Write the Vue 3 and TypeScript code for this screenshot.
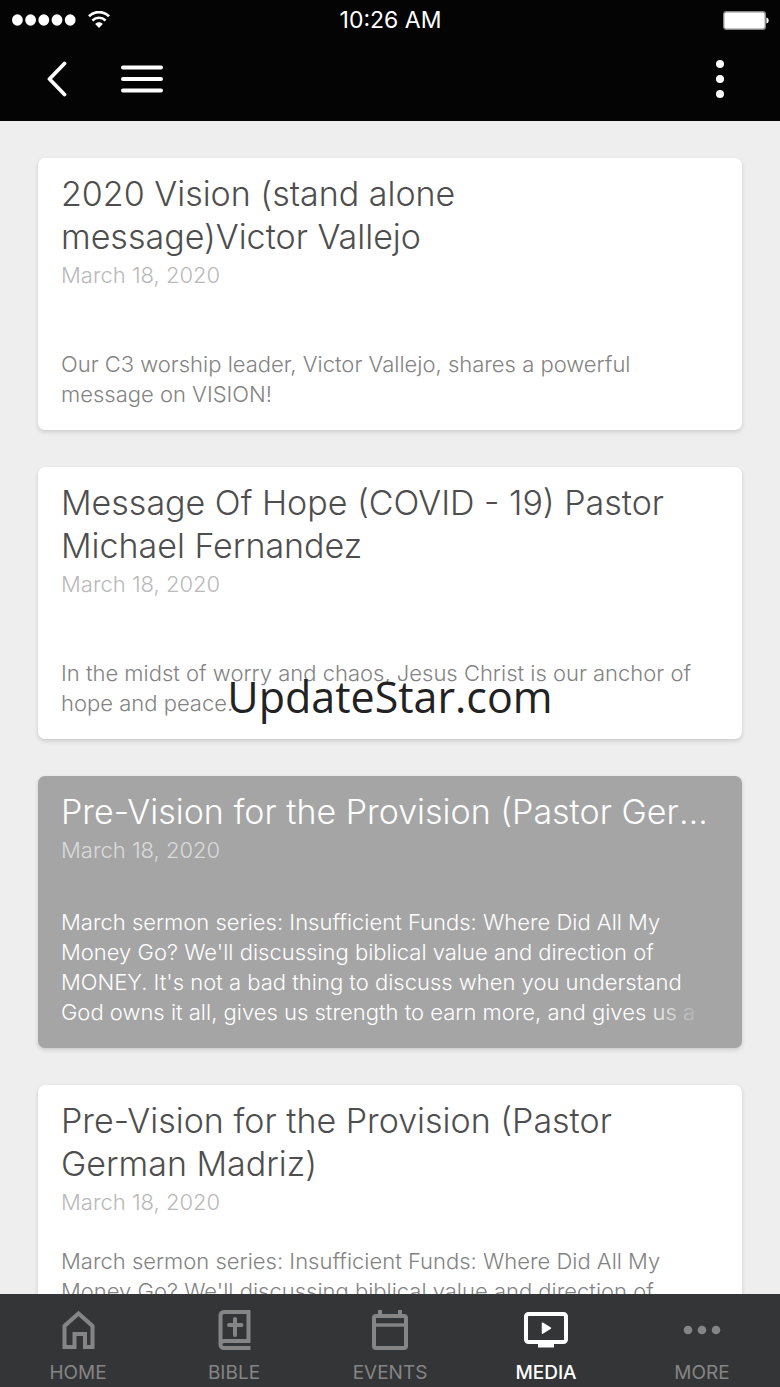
<script setup lang="ts">
interface Sermon {
  id: number
  title: string
  date: string
  text: string
  dark?: boolean
}

interface Tab {
  id: string
  label: string
}

const series =
  "March sermon series: Insufficient Funds: Where Did All My Money Go? We'll discussing biblical value and direction of MONEY. It's not a bad thing to discuss when you understand God owns it all, gives us strength to earn more, and gives us a"

const sermons: Sermon[] = [
  {
    id: 1,
    title: '2020 Vision (stand alone message)Victor Vallejo',
    date: 'March 18, 2020',
    text: 'Our C3 worship leader, Victor Vallejo, shares a powerful message on VISION!',
  },
  {
    id: 2,
    title: 'Message Of Hope (COVID - 19) Pastor Michael Fernandez',
    date: 'March 18, 2020',
    text: 'In the midst of worry and chaos, Jesus Christ is our anchor of hope and peace.',
  },
  {
    id: 3,
    title: 'Pre-Vision for the Provision (Pastor German Madriz)',
    date: 'March 18, 2020',
    text: series,
    dark: true,
  },
  {
    id: 4,
    title: 'Pre-Vision for the Provision (Pastor German Madriz)',
    date: 'March 18, 2020',
    text: series,
  },
]

const tabs: Tab[] = [
  { id: 'home', label: 'HOME' },
  { id: 'bible', label: 'BIBLE' },
  { id: 'events', label: 'EVENTS' },
  { id: 'media', label: 'MEDIA' },
  { id: 'more', label: 'MORE' },
]

const activeTab = 'media'
</script>

<template>
  <div class="app">
    <header class="top">
      <div class="status">
        <div class="signal">
          <svg width="64" height="12" viewBox="0 0 64 12" fill="#fff" aria-hidden="true">
            <ellipse v-for="n in 5" :key="n" :cx="n * 13.2 - 7.8" cy="6" rx="5.4" ry="5.7" />
          </svg>
          <svg width="22" height="18" viewBox="0 0 22 18" fill="none" stroke="#fff" aria-hidden="true">
            <path d="M1 5.2C6.700-.2 15.300-.2 21 5.200" stroke-width="2.8" />
            <path d="M4.400 9.500c3.800-3.600 9.400-3.600 13.200 0" stroke-width="2.6" />
            <path d="M11 17 7.200 13c2-2.300 5.600-2.300 7.600 0z" fill="#fff" stroke="none" />
          </svg>
        </div>
        <span class="clock">10:26 AM</span>
        <div class="power">
          <svg width="46" height="19" viewBox="0 0 46 19" aria-hidden="true">
            <rect x=".7" y=".7" width="41.6" height="17.6" rx="2.5" fill="#fff" stroke="#888" stroke-width="1.4" />
            <path d="M43.4 6.5c3 .5 3 5.5 0 6z" fill="#fff" />
          </svg>
        </div>
      </div>
      <nav class="bar" aria-label="Toolbar">
        <button type="button" class="tool" aria-label="Back">
          <svg width="20" height="36" viewBox="0 0 20 36" fill="none" stroke="#fff" stroke-width="3.8" stroke-linecap="round" stroke-linejoin="round">
            <path d="M17.500 2.500 2.500 18l15 15.500" />
          </svg>
        </button>
        <button type="button" class="tool" aria-label="Menu">
          <svg width="42" height="28" viewBox="0 0 42 28" fill="none" stroke="#fff" stroke-width="4" stroke-linecap="round">
            <path d="M2 2.500h38M2 14h38M2 25.500h38" />
          </svg>
        </button>
        <button type="button" class="tool last" aria-label="Options">
          <svg width="8" height="38" viewBox="0 0 8 38" fill="#fff">
            <circle cx="4" cy="4" r="4" />
            <circle cx="4" cy="19" r="4" />
            <circle cx="4" cy="34" r="4" />
          </svg>
        </button>
      </nav>
    </header>

    <main class="list">
      <a v-for="s in sermons" :key="s.id" href="#" class="card" :class="{ dark: s.dark }">
        <h2 class="title">{{ s.title }}</h2>
        <time class="date" datetime="2020-03-18">{{ s.date }}</time>
        <p class="text">{{ s.text }}</p>
      </a>
    </main>

    <nav class="tabs" aria-label="Sections">
      <a v-for="t in tabs" :key="t.id" href="#" class="tab" :class="{ active: t.id === activeTab }">
        <svg v-if="t.id === 'home'" class="icon" viewBox="0 0 44 44" fill="none" stroke="currentColor" stroke-width="4" stroke-linejoin="miter">
          <path d="M8.500 39V18L22.500 5.500 36.500 18v21H29V26H18.500v13z" />
        </svg>
        <svg v-else-if="t.id === 'bible'" class="icon" viewBox="0 0 44 44" fill="none" stroke="currentColor" stroke-width="4">
          <path d="M38.500 40H12a3.500 3.500 0 0 1-3.500-3.500V7.500A3.500 3.500 0 0 1 12 4h24.500v29H12a3.500 3.500 0 0 0-3.500 3.500" />
          <path d="M23 11v16M17 17h12.500" stroke-linecap="round" />
        </svg>
        <svg v-else-if="t.id === 'events'" class="icon" viewBox="0 0 44 44" fill="none" stroke="currentColor" stroke-width="4">
          <rect x="6" y="8" width="32" height="32" rx="2" />
          <path d="M6 17h32" stroke-width="3.400" />
          <path d="M12 7V2M32 7V2" />
        </svg>
        <svg v-else-if="t.id === 'media'" class="icon" viewBox="0 0 44 44" fill="none" stroke="currentColor" stroke-width="4">
          <rect x="2" y="6" width="40" height="28" rx="2.500" />
          <path d="M14 35h16v4.500H14z" fill="currentColor" stroke="none" />
          <path d="M18.500 15.200v10l8-5z" fill="currentColor" stroke-width="1.500" stroke-linejoin="round" />
        </svg>
        <svg v-else class="icon" viewBox="0 0 44 44" fill="currentColor">
          <circle cx="8" cy="22" r="4.300" />
          <circle cx="22" cy="22" r="4.300" />
          <circle cx="36" cy="22" r="4.300" />
        </svg>
        <span>{{ t.label }}</span>
      </a>
    </nav>

    <div class="watermark">UpdateStar.com</div>
  </div>
</template>

<style>
body {
  margin: 0;
}
</style>

<style scoped>
.app {
  position: relative;
  display: flex;
  flex-direction: column;
  height: 100vh;
  overflow: hidden;
  background: #eee;
  font-family: Inter, "Liberation Sans", sans-serif;
}

.top {
  flex: none;
  background: #040404;
  color: #fff;
}

.status {
  display: grid;
  grid-template-columns: 1fr auto 1fr;
  align-items: center;
  height: 40px;
  padding: 0 11px 0 12px;
}

.signal {
  display: flex;
  align-items: center;
  gap: 12px;
}

.clock {
  font-size: 23px;
  line-height: 40px;
}

.power {
  display: flex;
  justify-content: flex-end;
}

.bar {
  display: flex;
  align-items: center;
  gap: 54px;
  height: 81px;
  padding: 0 56px 3px 47px;
  box-sizing: border-box;
}

.tool {
  display: flex;
  padding: 0;
  border: 0;
  background: none;
}

.last {
  margin-left: auto;
}

.list {
  flex: 1;
  min-height: 0;
  display: flex;
  flex-direction: column;
  gap: 37px;
  padding: 37px 38px;
  overflow-y: auto;
  scrollbar-width: none;
}

.card {
  flex: none;
  display: flex;
  flex-direction: column;
  min-height: 272px;
  padding: 14px 23px 21px;
  box-sizing: border-box;
  border-radius: 7px;
  background: #fff;
  box-shadow: 0 2px 4px rgba(0, 0, 0, 0.15);
  color: #838383;
  font-weight: 300;
  text-decoration: none;
}

.title {
  margin: 0;
  padding-right: 10px;
  color: #4e4e4e;
  font-size: 34px;
  font-weight: 300;
  line-height: 43px;
}

.date {
  margin: 2px 0 29px;
  color: #b9b9b9;
  font-size: 22px;
  line-height: 30px;
}

.text {
  position: relative;
  max-height: 120px;
  margin: auto 0 0;
  overflow: hidden;
  font-size: 22px;
  line-height: 30px;
}

.dark {
  background: #a5a5a5;
  color: #fff;
}

.dark .title {
  overflow: hidden;
  color: #fff;
  text-overflow: ellipsis;
  white-space: nowrap;
}

.dark .date {
  color: #dadada;
}

.dark .text::after {
  content: "";
  position: absolute;
  right: 0;
  bottom: 0;
  width: 72px;
  height: 30px;
  background: linear-gradient(to right, rgba(165, 165, 165, 0), #a5a5a5 80%);
}

.tabs {
  flex: none;
  display: flex;
  height: 93px;
  background: #343536;
}

.tab {
  flex: 1;
  display: flex;
  flex-direction: column;
  align-items: center;
  gap: 10px;
  padding-top: 14px;
  color: #858585;
  font-size: 19px;
  line-height: 22px;
  text-decoration: none;
}

.active {
  color: #fff;
  font-weight: 500;
}

.icon {
  width: 44px;
  height: 44px;
}

.watermark {
  position: absolute;
  top: 50%;
  left: 50%;
  transform: translate(-50%, -50%);
  padding-top: 6px;
  color: #222;
  font-family: "Open Sans", "Noto Sans", sans-serif;
  font-size: 43px;
  line-height: 60px;
  pointer-events: none;
}
</style>
